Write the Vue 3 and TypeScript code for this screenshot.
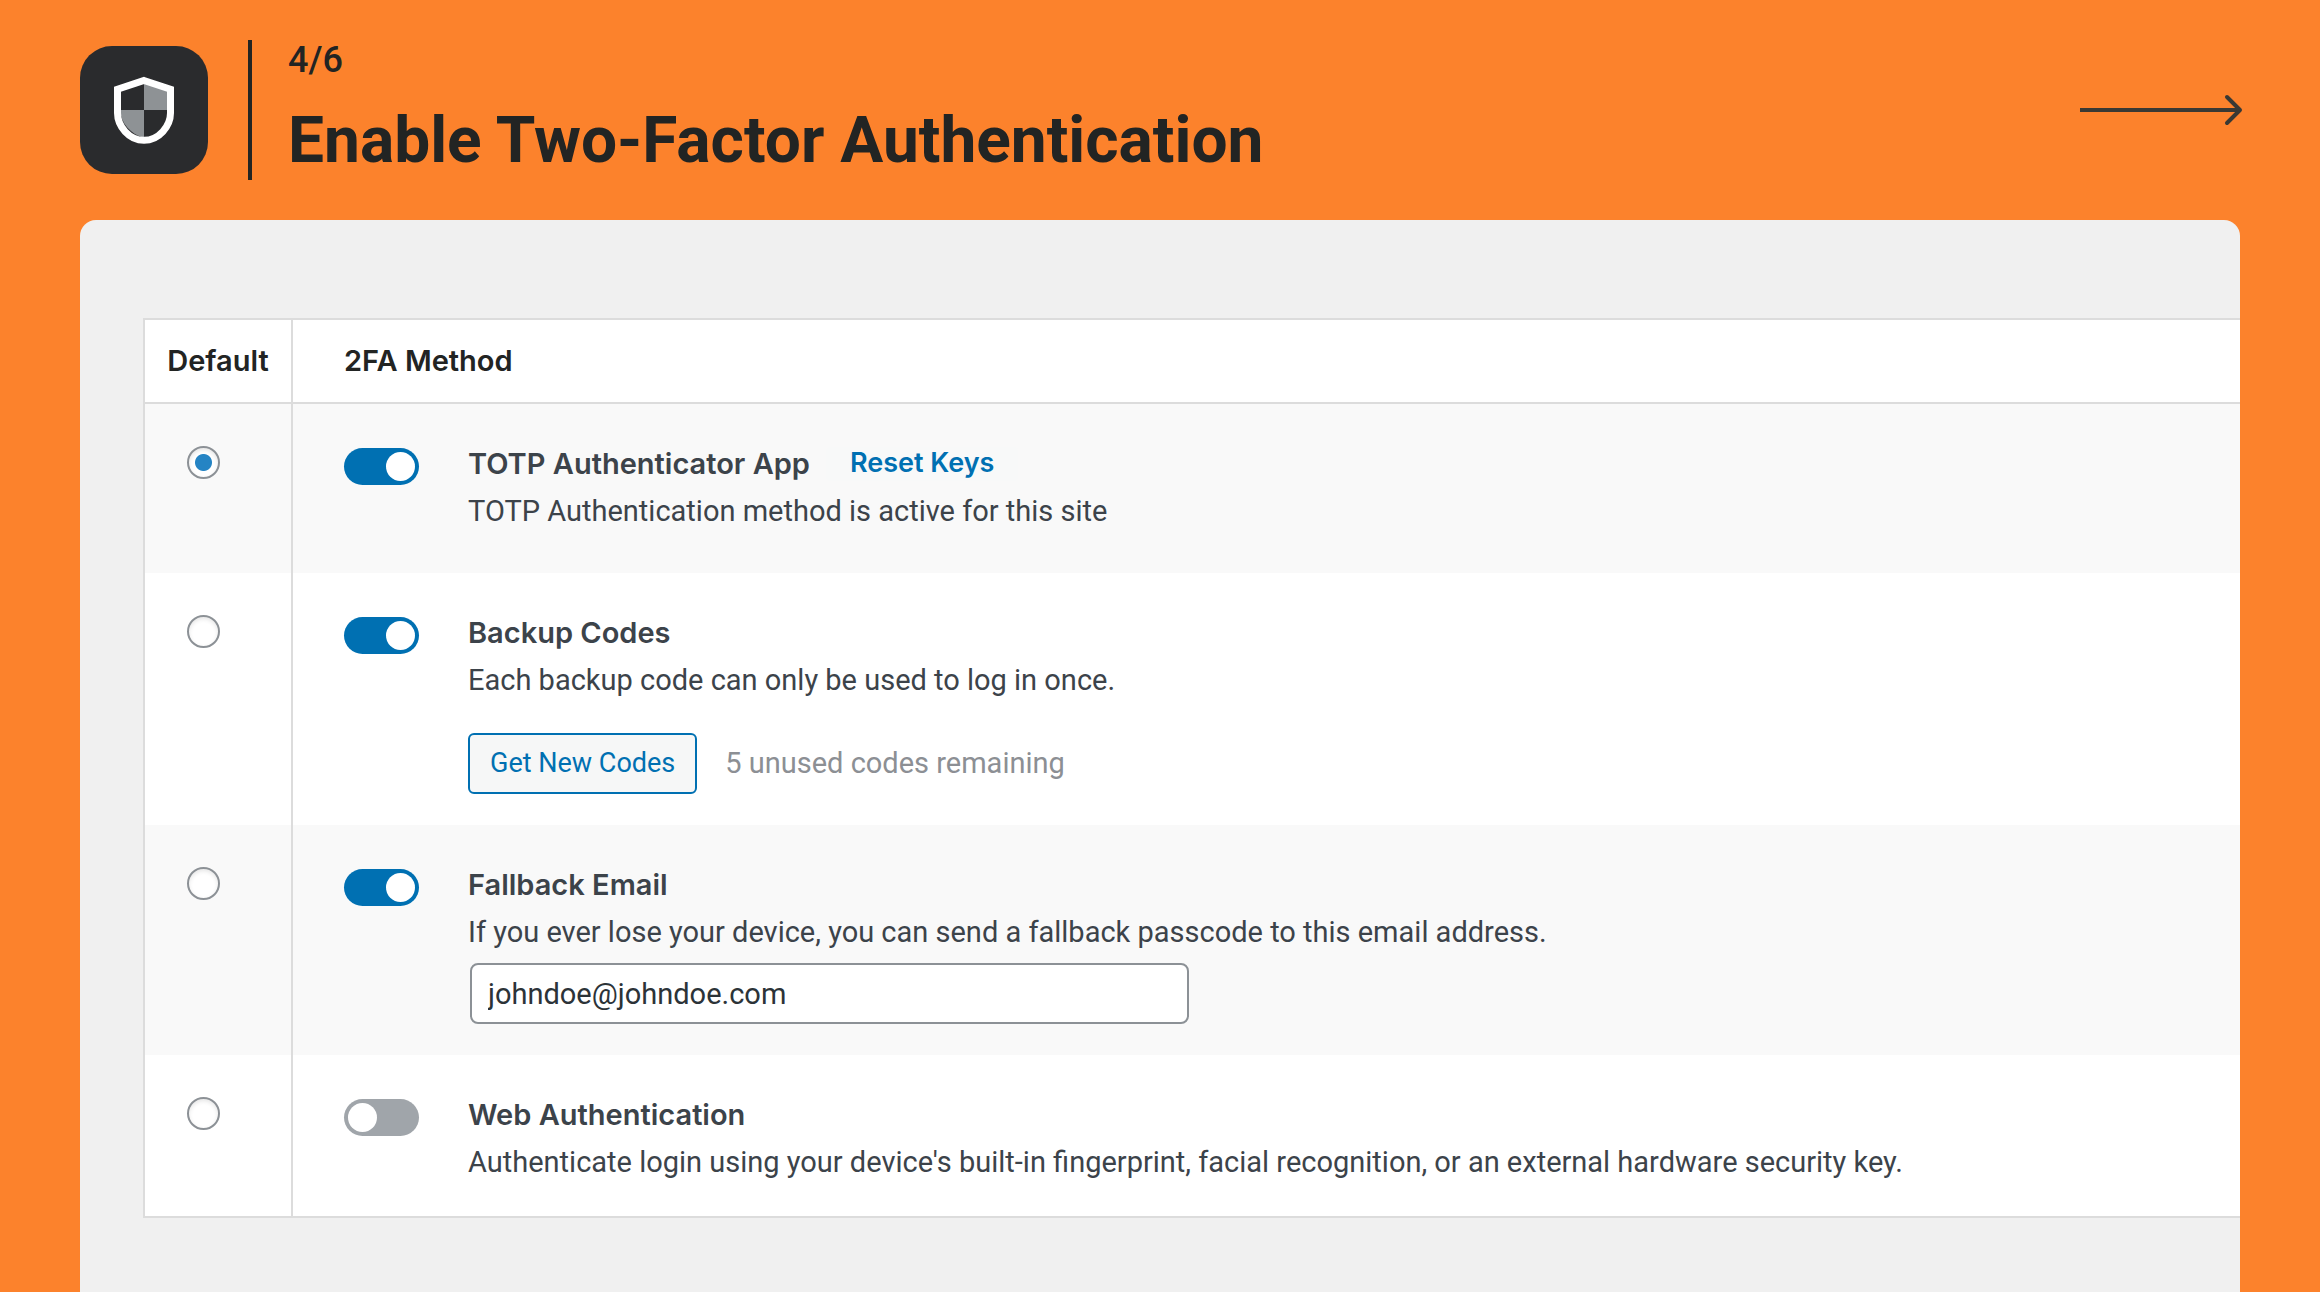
<script setup lang="ts">
import { ref } from 'vue'

type MethodId = 'totp' | 'backup' | 'email' | 'webauthn'

interface Method {
  id: MethodId
  title: string
  description: string
  enabled: boolean
}

const methods = ref<Method[]>([
  {
    id: 'totp',
    title: 'TOTP Authenticator App',
    description: 'TOTP Authentication method is active for this site',
    enabled: true,
  },
  {
    id: 'backup',
    title: 'Backup Codes',
    description: 'Each backup code can only be used to log in once.',
    enabled: true,
  },
  {
    id: 'email',
    title: 'Fallback Email',
    description: 'If you ever lose your device, you can send a fallback passcode to this email address.',
    enabled: true,
  },
  {
    id: 'webauthn',
    title: 'Web Authentication',
    description:
      "Authenticate login using your device's built-in fingerprint, facial recognition, or an external hardware security key.",
    enabled: false,
  },
])

const defaultMethod = ref<MethodId>('totp')
const email = ref('johndoe@johndoe.com')
const unusedCodes = ref(5)
</script>

<template>
  <div class="page">
    <header class="header">
      <div class="logo">
        <svg viewBox="0 0 62 68" width="62" height="68" aria-hidden="true">
          <path d="M31 7 55 15V34H31z" fill="#8e9295" />
          <path d="M7 34H31V62C18 58 8 48 7 34z" fill="#8e9295" />
          <path
            d="M31 4.500 57.500 13.300V37C57.500 50 46 64.300 31 64.300S4.500 50 4.500 37V13.300z"
            fill="none"
            stroke="#fff"
            stroke-width="7"
          />
        </svg>
      </div>
      <div class="heading">
        <p class="step">4/6</p>
        <h1 class="title">Enable Two-Factor Authentication</h1>
      </div>
      <a class="next" href="#next" aria-label="Next step">
        <svg viewBox="0 0 164 32" width="164" height="32" aria-hidden="true">
          <path d="M0 16H158" fill="none" stroke="#393934" stroke-width="4" />
          <path
            d="M147 3 160 16 147 29"
            fill="none"
            stroke="#393934"
            stroke-width="4"
            stroke-linecap="round"
            stroke-linejoin="round"
          />
        </svg>
      </a>
    </header>

    <main class="panel">
      <table class="methods">
        <thead>
          <tr>
            <th class="col-default" scope="col">Default</th>
            <th class="col-method" scope="col">2FA Method</th>
          </tr>
        </thead>
        <tbody>
          <tr v-for="m in methods" :key="m.id">
            <td class="cell-default">
              <input
                v-model="defaultMethod"
                class="radio"
                type="radio"
                name="default-method"
                :value="m.id"
                :aria-label="`Use ${m.title} by default`"
              />
            </td>
            <td class="cell-method">
              <div class="method">
                <input :id="`toggle-${m.id}`" v-model="m.enabled" class="toggle" type="checkbox" />
                <div class="body">
                  <div class="name-row">
                    <label class="name" :for="`toggle-${m.id}`">{{ m.title }}</label>
                    <button v-if="m.id === 'totp'" class="reset" type="button">Reset Keys</button>
                  </div>
                  <p class="description" :class="{ spaced: m.id === 'totp' }">{{ m.description }}</p>
                  <div v-if="m.id === 'backup'" class="codes">
                    <button class="button" type="button">Get New Codes</button>
                    <span class="remaining">{{ unusedCodes }} unused codes remaining</span>
                  </div>
                  <input
                    v-if="m.id === 'email'"
                    v-model="email"
                    class="email"
                    type="email"
                    aria-label="Fallback email address"
                  />
                </div>
              </div>
            </td>
          </tr>
        </tbody>
      </table>
    </main>
  </div>
</template>

<style>
body {
  background: #fc822c;
}
</style>

<style scoped>
.page {
  display: flex;
  flex-direction: column;
  box-sizing: border-box;
  min-height: 100vh;
  padding: 40px 80px 0;
  background: #fc822c;
  color: #222423;
  font-family: Roboto, sans-serif;
}

.header {
  display: flex;
  align-items: center;
  height: 140px;
  margin-bottom: 40px;
}

.logo {
  display: flex;
  align-items: center;
  justify-content: center;
  width: 128px;
  height: 128px;
  border-radius: 32px;
  background: #2a2b2d;
}

.heading {
  display: flex;
  flex-direction: column;
  box-sizing: border-box;
  height: 140px;
  margin-left: 40px;
  padding-left: 36px;
  border-left: 4px solid #222423;
}

.step {
  margin: 0;
  font-size: 36px;
  font-weight: 500;
  line-height: 40px;
}

.title {
  margin: 21px 0 0;
  font-size: 64px;
  font-weight: 700;
  line-height: 80px;
}

.next {
  display: flex;
  margin-left: auto;
  margin-right: -4px;
}

.panel {
  flex: 1;
  padding: 98px 0 74px 63px;
  border-radius: 16px 16px 0 0;
  background: #f0f0f0;
}

.methods {
  width: 100%;
  border: 2px solid #dcdcdc;
  border-right: 0;
  border-collapse: separate;
  border-spacing: 0;
  background: #fff;
}

.methods th {
  height: 82px;
  padding: 0;
  border-bottom: 2px solid #dcdcdc;
  font-family: Inter, sans-serif;
  font-size: 29px;
  font-weight: 600;
  line-height: 40px;
}

.methods .col-default {
  width: 146px;
  border-right: 2px solid #dcdcdc;
  text-align: center;
}

.methods .col-method {
  padding-left: 51px;
  text-align: left;
}

.methods td {
  padding: 0;
  vertical-align: top;
}

.methods tbody tr:nth-child(odd) td {
  background: #f9f9f9;
}

.methods .cell-default {
  padding: 42px 0 0 42px;
  border-right: 2px solid #dcdcdc;
}

.methods .cell-method {
  padding: 36px 51px 31px;
}

.radio {
  display: block;
  box-sizing: border-box;
  width: 33px;
  height: 33px;
  margin: 0;
  border: 2px solid #8c9196;
  border-radius: 50%;
  background: #fff;
  box-shadow: inset 0 2px 4px rgba(0, 0, 0, 0.1);
  appearance: none;
}

.radio:checked {
  background: radial-gradient(circle, #2584c4 8px, #fff 9px);
}

.method {
  display: flex;
  align-items: flex-start;
}

.toggle {
  flex: none;
  box-sizing: border-box;
  width: 75px;
  height: 37px;
  margin: 8px 49px 0 0;
  padding: 4px;
  border-radius: 19px;
  background: #a0a5aa;
  appearance: none;
}

.toggle::before {
  display: block;
  width: 29px;
  height: 29px;
  border-radius: 50%;
  background: #fff;
  content: '';
}

.toggle:checked {
  background: #0070b2;
}

.toggle:checked::before {
  margin-left: auto;
}

.body {
  flex: 1;
  min-width: 0;
}

.name-row {
  display: flex;
  align-items: center;
  gap: 16px;
  height: 48px;
}

.name {
  color: #3c434a;
  font-family: Inter, sans-serif;
  font-size: 29px;
  font-weight: 600;
  line-height: 48px;
}

.reset {
  height: 34px;
  padding: 0 24px 2px;
  border: 0;
  border-radius: 4px;
  background: #f8f9f9;
  color: #0070b2;
  font-family: Inter, sans-serif;
  font-size: 27px;
  font-weight: 600;
  line-height: 32px;
}

.description {
  margin: 0;
  color: #3c434a;
  font-size: 29px;
  line-height: 46px;
}

.spaced {
  padding-bottom: 8px;
}

.codes {
  display: flex;
  align-items: center;
  gap: 28px;
  margin-top: 30px;
}

.button {
  box-sizing: border-box;
  height: 61px;
  padding: 0 20px 2px;
  border: 2px solid #0070b2;
  border-radius: 6px;
  background: #f6f7f7;
  color: #0070b2;
  font-family: Roboto, sans-serif;
  font-size: 27px;
}

.remaining {
  padding-bottom: 2px;
  color: #8c8f94;
  font-size: 29px;
  line-height: 46px;
}

.email {
  display: block;
  box-sizing: border-box;
  width: 100%;
  max-width: 719px;
  height: 61px;
  margin: 8px 0 0 2px;
  padding: 0 16px;
  border: 2px solid #8c9196;
  border-radius: 8px;
  background: #fff;
  color: #2c3338;
  font-family: Roboto, sans-serif;
  font-size: 29px;
}
</style>
